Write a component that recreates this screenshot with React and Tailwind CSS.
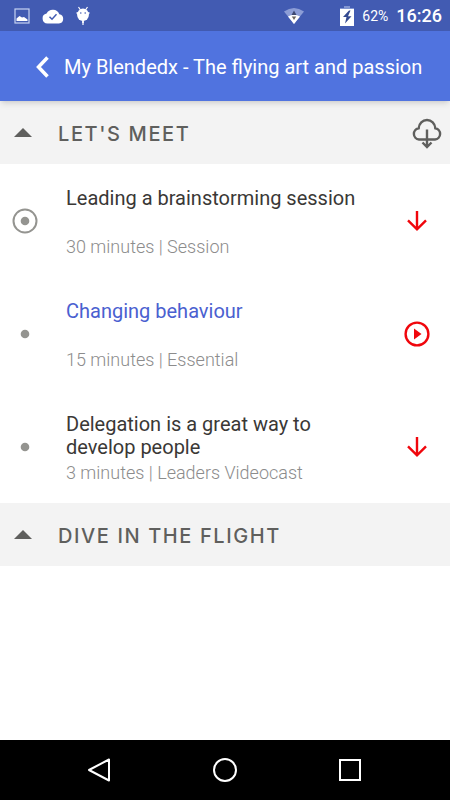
const sections = [
  {
    title: "LET'S MEET",
    downloadable: true,
    items: [
      { title: "Leading a brainstorming session", meta: "30 minutes | Session", action: "download", current: true },
      { title: "Changing behaviour", meta: "15 minutes | Essential", action: "play", active: true },
      { title: "Delegation is a great way to develop people", meta: "3 minutes | Leaders Videocast", action: "download" },
    ],
  },
  { title: "DIVE IN THE FLIGHT", items: [] },
];

function StatusBar() {
  return (
    <div className="flex h-[31px] items-center justify-between bg-[#425bb2] pl-3.5 pr-2 text-white">
      <div className="flex items-center gap-3">
        <svg className="h-4 w-4" viewBox="0 0 16 16" fill="none">
          <rect x="1" y="1" width="14" height="14" stroke="#c6d2f2" strokeWidth="1.2" />
          <path d="M2.5 13v-2.500l3-2.500 2.500 1.500 2-.5 3.500 2.500V13z" fill="#fff" />
        </svg>
        <svg className="h-4 w-[22px]" viewBox="0 0 22 16">
          <path d="M5.500 15.500a5 5 0 0 1-.9-9.900A7 7 0 0 1 17.300 6.200a4.700 4.700 0 0 1-.3 9.300z" fill="#fff" />
          <path d="M7.500 8.700l2.500 2.500 4.500-5" fill="none" stroke="#425bb2" strokeWidth="1.500" />
        </svg>
        <svg className="h-5 w-3.5" viewBox="0 0 14 20" fill="#fff">
          <path d="M2.500 1l2 3M11.500 1l-2 3M7 14v5" stroke="#fff" strokeWidth="1.200" />
          <path d="M.500 7h13M7 15v2" stroke="#fff" strokeWidth="1.500" />
          <ellipse cx="7" cy="8.800" rx="5.900" ry="6.200" />
          <circle cx="4.800" cy="7" r=".8" fill="#425bb2" />
          <circle cx="9.200" cy="7" r=".8" fill="#425bb2" />
        </svg>
      </div>
      <div className="flex items-center">
        <svg className="mr-9 h-[18px] w-5" viewBox="0 0 20 18">
          <path d="M0 4.500Q10-2.500 20 4.500L10 17z" fill="#8c9dd6" />
          <path d="M4 9.500Q10 6 16 9.500L10 17z" fill="#fff" />
          <path d="M10 3.500l2.500 4.500h-5z" fill="#3d4871" />
          <path d="M7.800 9.500h4.400L10 13z" fill="#6b6460" />
        </svg>
        <svg className="mr-2 h-5 w-3.5" viewBox="0 0 14 20">
          <path d="M4 0h6v2h4v2H0V2h4z" fill="#8296d2" />
          <path d="M0 3h14v17H0z" fill="#fff" />
          <path d="M9 4.500L3 11h3.500L5 17.500l6.500-7.300H8L10.500 4.500z" fill="#344a91" />
        </svg>
        <span className="mr-2 text-sm">62%</span>
        <span className="text-lg font-medium">16:26</span>
      </div>
    </div>
  );
}

function Header() {
  return (
    <header className="relative flex h-[70px] items-center bg-[#5073df] pl-8 pt-0.5 text-white shadow-md">
      <button type="button" aria-label="Back" className="mr-3 grid h-10 w-5 place-items-center">
        <svg className="h-6 w-4" viewBox="0 0 16 24" fill="none" stroke="currentColor" strokeWidth="3.500">
          <path d="M13.500 2.500L4.500 12l9 9.500" />
        </svg>
      </button>
      <h1 className="whitespace-nowrap text-xl">My Blendedx - The flying art and passion</h1>
    </header>
  );
}

function Marker({ current }) {
  return (
    <svg className="h-[26px] w-[26px] text-[#949490]" viewBox="0 0 26 26" aria-hidden="true">
      {current && <circle cx="13" cy="13" r="11.500" fill="none" stroke="currentColor" strokeWidth="2" />}
      <circle cx="13" cy="13" r="4.300" fill="currentColor" />
    </svg>
  );
}

function ActionButton({ action, title }) {
  return (
    <button
      type="button"
      aria-label={`${action === "play" ? "Play" : "Download"} ${title}`}
      className="ml-auto grid h-10 w-10 place-items-center text-[#f0060c]"
    >
      <svg className="h-[26px] w-[26px]" viewBox="0 0 26 26" fill="none" stroke="currentColor" strokeWidth="2.400">
        {action === "play" ? (
          <>
            <circle cx="13" cy="13" r="11.400" />
            <path d="M10 7.500l7.500 5.500-7.500 5.500z" fill="currentColor" stroke="none" />
          </>
        ) : (
          <path d="M13 3v18M4 12.300l9 9 9-9" />
        )}
      </svg>
    </button>
  );
}

function Item({ item }) {
  return (
    <li className="flex min-h-[113px] items-center pl-3 pr-[13px]">
      <Marker current={item.current} />
      <div className="ml-7 max-w-[300px] pt-1">
        <h3 className={`min-h-[46px] text-xl leading-[23px] ${item.active ? "text-[#4a60d0]" : "text-[#3a3836]"}`}>
          {item.title}
        </h3>
        <p className="pt-0.5 text-lg font-light leading-6 text-[#8c8c8c]">{item.meta}</p>
      </div>
      <ActionButton action={item.action} title={item.title} />
    </li>
  );
}

function Section({ section }) {
  return (
    <section>
      <div className="flex h-[63px] items-center bg-[#f3f3f3] pr-2 text-[#5f5f5d]">
        <button type="button" className="flex items-center pl-3.5">
          <svg className="h-[9px] w-[18px]" viewBox="0 0 18 9" fill="currentColor" aria-hidden="true">
            <path d="M0 9l9-9 9 9z" />
          </svg>
          <h2 className="ml-[26px] pt-0.5 font-['Inter','Liberation_Sans',sans-serif] text-xl font-medium tracking-[0.08em]">
            {section.title}
          </h2>
        </button>
        {section.downloadable && (
          <button type="button" aria-label="Download all" className="ml-auto">
            <svg className="h-8 w-[30px]" viewBox="0 0 30 32" fill="none" stroke="currentColor" strokeWidth="2.400">
              <path d="M7 22.500a5.700 5.700 0 0 1-.3-11.300C7 6.500 10.500 3 15 3s8 3.500 8.300 8.200A5.700 5.700 0 0 1 23 22.500z" />
              <path d="M15 12.500V30M10.500 25.500l4.500 4.500 4.500-4.500" />
            </svg>
          </button>
        )}
      </div>
      <ul>
        {section.items.map((item) => (
          <Item key={item.title} item={item} />
        ))}
      </ul>
    </section>
  );
}

function NavBar() {
  return (
    <nav className="flex h-[60px] items-center justify-between bg-black px-[88px] text-white">
      <button type="button" aria-label="Back">
        <svg className="h-6 w-6" viewBox="0 0 24 24" fill="none" stroke="currentColor" strokeWidth="2" strokeLinejoin="round">
          <path d="M21 1.500v21L1 12z" />
        </svg>
      </button>
      <button type="button" aria-label="Home">
        <svg className="h-6 w-6" viewBox="0 0 24 24" fill="none" stroke="currentColor" strokeWidth="2">
          <circle cx="12" cy="12" r="11" />
        </svg>
      </button>
      <button type="button" aria-label="Recent apps">
        <svg className="h-6 w-6" viewBox="0 0 24 24" fill="none" stroke="currentColor" strokeWidth="2">
          <rect x="2" y="2" width="20" height="20" />
        </svg>
      </button>
    </nav>
  );
}

export default function App() {
  return (
    <div className="flex min-h-screen flex-col bg-white font-['Roboto','Liberation_Sans',sans-serif]">
      <StatusBar />
      <Header />
      <main className="flex-1">
        {sections.map((section) => (
          <Section key={section.title} section={section} />
        ))}
      </main>
      <NavBar />
    </div>
  );
}
